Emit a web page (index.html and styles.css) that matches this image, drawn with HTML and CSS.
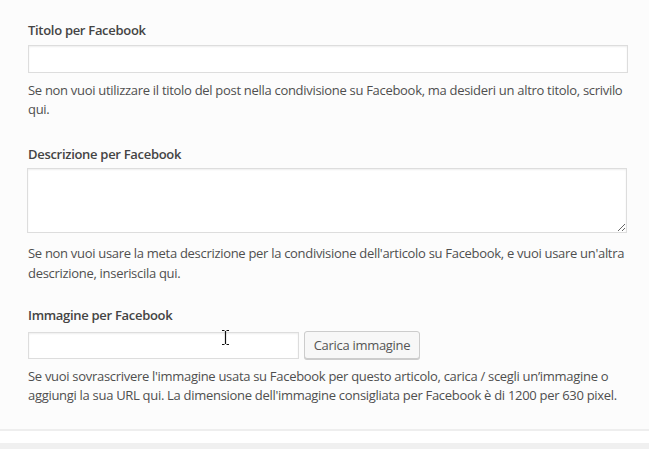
FILE: index.html
```html
<!DOCTYPE html>
<html lang="it">
<head>
<meta charset="utf-8">
<link rel="stylesheet" href="styles.css">
</head>
<body>
<div class="panel">
  <div class="field field-title">
    <label class="label" for="fb-title">Titolo per Facebook</label>
    <input class="text-input wide" id="fb-title" type="text">
    <p class="help">Se non vuoi utilizzare il titolo del post nella condivisione su Facebook, ma desideri un altro titolo, scrivilo qui.</p>
  </div>
  <div class="field field-desc">
    <label class="label" for="fb-desc">Descrizione per Facebook</label>
    <textarea class="text-area" id="fb-desc"></textarea>
    <p class="help help-desc">Se non vuoi usare la meta descrizione per la condivisione dell'articolo su Facebook, e vuoi usare un'altra descrizione, inseriscila qui.</p>
  </div>
  <div class="field field-image">
    <label class="label" for="fb-image">Immagine per Facebook</label>
    <div class="upload-row">
      <input class="text-input short" id="fb-image" type="text">
      <button class="button" type="button">Carica immagine</button>
      <svg class="cursor" width="9" height="17" viewBox="0 0 9 17"><path d="M1 1.5h2.5M5.5 1.5H8M4.5 2v13M1 15.5h2.5M5.5 15.5H8" stroke="#111" stroke-width="1.2" fill="none"/></svg>
    </div>
    <p class="help help-image">Se vuoi sovrascrivere l'immagine usata su Facebook per questo articolo, carica / scegli un’immagine o aggiungi la sua URL qui. La dimensione dell'immagine consigliata per Facebook è di 1200 per 630 pixel.</p>
  </div>
</div>
<div class="footer">
  <div class="divider"></div>
  <div class="gap"></div>
  <div class="bar"></div>
</div>
</body>
</html>
```

FILE: styles.css
```css
html, body {
  margin: 0;
  padding: 0;
  background: #fcfcfc;
}
body {
  font-family: "Open Sans", "Noto Sans", sans-serif;
  font-size: 13px;
  letter-spacing: -0.3px;
  line-height: 19.5px;
  color: #4f4f4f;
}
.panel {
  padding: 21px 0 23px 28px;
}
.field {
  display: flex;
  flex-direction: column;
  width: 600px;
}
.label {
  font-weight: 600;
  color: #444;
  margin-bottom: 4px;
}
.text-input {
  box-sizing: border-box;
  height: 28px;
  border: 1px solid #ddd;
  background: #fff;
  box-shadow: inset 0 1px 2px rgba(0,0,0,.07);
  margin: 0;
  padding: 0 6px;
  font: inherit;
}
.wide { width: 600px; }
.help {
  margin: 8px 0 0;
}
.field-desc { margin-top: 25px; }
.text-area {
  box-sizing: border-box;
  width: 600px;
  height: 65px;
  margin: 0 0 0 -1px;
  border: 1px solid #ddd;
  background: #fff;
  box-shadow: inset 0 1px 2px rgba(0,0,0,.07);
  font: inherit;
  resize: vertical;
}
.help-desc { margin-top: 11px; }
.field-image { margin-top: 23px; }
.upload-row {
  display: flex;
  align-items: flex-end;
  gap: 5px;
  position: relative;
  margin-top: 1px;
}
.short { width: 271px; height: 27px; flex-shrink: 0; }
.button {
  flex-shrink: 0;
  white-space: nowrap;
  box-sizing: border-box;
  height: 28px;
  width: 116px;
  border: 1px solid #ccc;
  border-radius: 3px;
  background: #f7f7f7;
  box-shadow: 0 1px 0 #ccc;
  color: #555;
  font: inherit;
  letter-spacing: -0.3px;
  padding: 2px 0 0;
}
.cursor {
  position: absolute;
  left: 193px;
  top: -2px;
}
.help-image { margin-top: 8px; }
.divider {
  height: 2px;
  background: #eee;
}
.gap {
  height: 12px;
  background: #fff;
}
.bar {
  height: 20px;
  background: #f0f0f0;
}
```
